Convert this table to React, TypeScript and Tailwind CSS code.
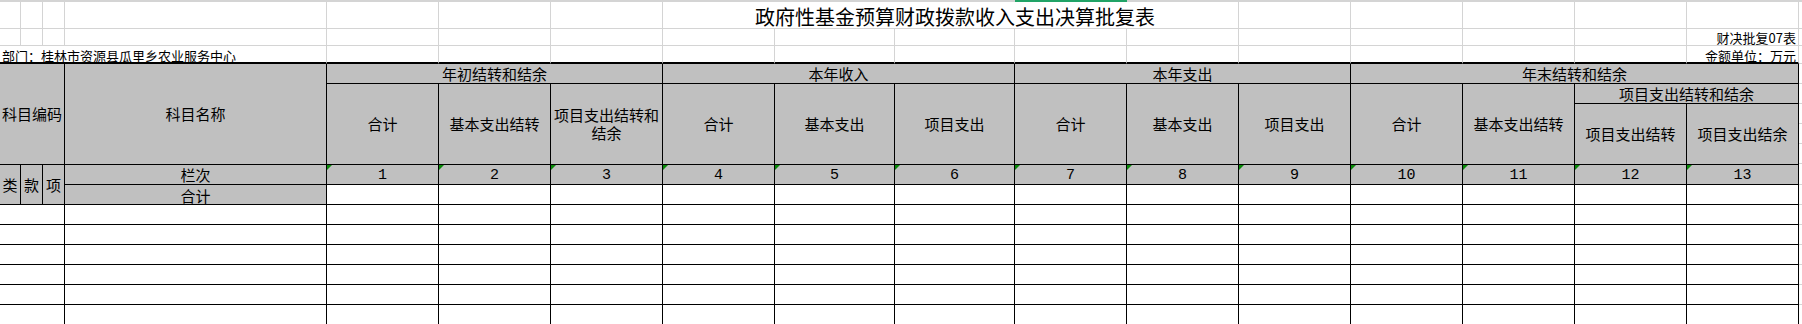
import React from "react";

// column widths match the sheet: 类/款/项, 科目名称, then the 13 amount columns and a sliver of the next column
const GRID =
  "grid grid-cols-[21px_22px_22px_262px_112px_112px_112px_112px_120px_120px_112px_112px_112px_112px_112px_112px_112px_3px]";

const HEAD =
  "flex items-center justify-center border-r border-b border-black bg-[#c0c0c0] text-center text-[15px] leading-[18px]";

const cols13 = ["1", "2", "3", "4", "5", "6", "7", "8", "9", "10", "11", "12", "13"];

function GridCell({ className = "" }: { className?: string }) {
  return <div className={`border-r border-b border-[#d4d4d4] ${className}`} />;
}

function Stub() {
  return <div className="border-b border-[#d4d4d4]" />;
}

function TopRows() {
  return (
    <div className={`${GRID} grid-rows-[2px_27px_17px_18px]`}>
      {/* column header edge, selected column underlined */}
      <div className="col-span-10 bg-[#d4d4d4]" />
      <div className="bg-[#21a366]" />
      <div className="col-span-7 bg-[#d4d4d4]" />

      {/* title row */}
      {Array.from({ length: 7 }).map((_, i) => (
        <GridCell key={`t${i}`} />
      ))}
      <div className="col-span-5 flex items-end justify-center whitespace-nowrap border-r border-b border-[#d4d4d4] pb-[1px] pl-[9px] text-[20px] leading-[20px]">
        政府性基金预算财政拨款收入支出决算批复表
      </div>
      {Array.from({ length: 5 }).map((_, i) => (
        <GridCell key={`t2${i}`} />
      ))}
      <Stub />

      {/* form number row */}
      {Array.from({ length: 16 }).map((_, i) => (
        <GridCell key={`f${i}`} />
      ))}
      <div className="flex items-end justify-end whitespace-nowrap border-r border-b border-[#d4d4d4] pr-[2px] text-[13px] leading-[14px]">
        财决批复07表
      </div>
      <Stub />

      {/* department / unit row */}
      <div className="col-span-4 flex items-end whitespace-nowrap border-r border-r-[#d4d4d4] border-b-2 border-b-black pl-[2px] text-[13px] leading-[13px]">
        部门：桂林市资源县瓜里乡农业服务中心
      </div>
      {Array.from({ length: 12 }).map((_, i) => (
        <div key={`d${i}`} className="border-r border-r-[#d4d4d4] border-b-2 border-b-black" />
      ))}
      <div className="flex items-end justify-end whitespace-nowrap border-r border-r-[#d4d4d4] border-b-2 border-b-black pr-[2px] text-[13px] leading-[13px]">
        金额单位：万元
      </div>
      <Stub />
    </div>
  );
}

function Table() {
  const midHeads = [
    "合计",
    "基本支出结转",
    "项目支出结转和结余",
    "合计",
    "基本支出",
    "项目支出",
    "合计",
    "基本支出",
    "项目支出",
    "合计",
    "基本支出结转",
  ];

  return (
    <div
      className={`${GRID} grid-rows-[20px_20px_61px_20px_20px_20px_20px_20px_20px_20px_20px]`}
    >
      {/* header row 1 */}
      <div className={`${HEAD} col-span-3 row-span-3 whitespace-nowrap`}>科目编码</div>
      <div className={`${HEAD} row-span-3`}>科目名称</div>
      <div className={`${HEAD} col-span-3`}>年初结转和结余</div>
      <div className={`${HEAD} col-span-3`}>本年收入</div>
      <div className={`${HEAD} col-span-3`}>本年支出</div>
      <div className={`${HEAD} col-span-4`}>年末结转和结余</div>
      <Stub />

      {/* header row 2 */}
      {midHeads.map((h, i) => (
        <div key={`h${i}`} className={`${HEAD} row-span-2 px-[3px]`}>
          {h}
        </div>
      ))}
      <div className={`${HEAD} col-span-2`}>项目支出结转和结余</div>
      <Stub />

      {/* header row 3 */}
      <div className={HEAD}>项目支出结转</div>
      <div className={HEAD}>项目支出结余</div>
      <div className="flex flex-col">
        <div className="h-[20px] border-b border-[#d4d4d4]" />
        <div className="h-[20px] border-b border-[#d4d4d4]" />
        <div className="h-[20px] border-b border-[#d4d4d4]" />
      </div>

      {/* 栏次 row */}
      <div className={`${HEAD} row-span-2`}>类</div>
      <div className={`${HEAD} row-span-2`}>款</div>
      <div className={`${HEAD} row-span-2`}>项</div>
      <div className={HEAD}>栏次</div>
      {cols13.map((n) => (
        <div
          key={`n${n}`}
          className={`${HEAD} relative pt-[2px] font-['Liberation_Mono',monospace] text-[14px]`}
        >
          <span className="absolute left-0 top-0 h-[5px] w-[5px] bg-[#0a8a0a] [clip-path:polygon(0_0,100%_0,0_100%)]" />
          {n}
        </div>
      ))}
      <Stub />

      {/* 合计 row */}
      <div className={`${HEAD} pt-[2px]`}>合计</div>
      {cols13.map((n) => (
        <div key={`s${n}`} className="border-r border-b border-black bg-white" />
      ))}
      <Stub />

      {/* empty body rows */}
      {Array.from({ length: 6 }).map((_, r) => (
        <React.Fragment key={`r${r}`}>
          <div className="col-span-3 border-r border-b border-black" />
          {Array.from({ length: 14 }).map((_, c) => (
            <div key={`c${c}`} className="border-r border-b border-black" />
          ))}
          <Stub />
        </React.Fragment>
      ))}
    </div>
  );
}

export default function App() {
  return (
    <div className="h-[324px] w-[1802px] overflow-hidden bg-white font-['Noto_Sans_CJK_SC','Liberation_Sans',sans-serif] text-black">
      <TopRows />
      <Table />
    </div>
  );
}
